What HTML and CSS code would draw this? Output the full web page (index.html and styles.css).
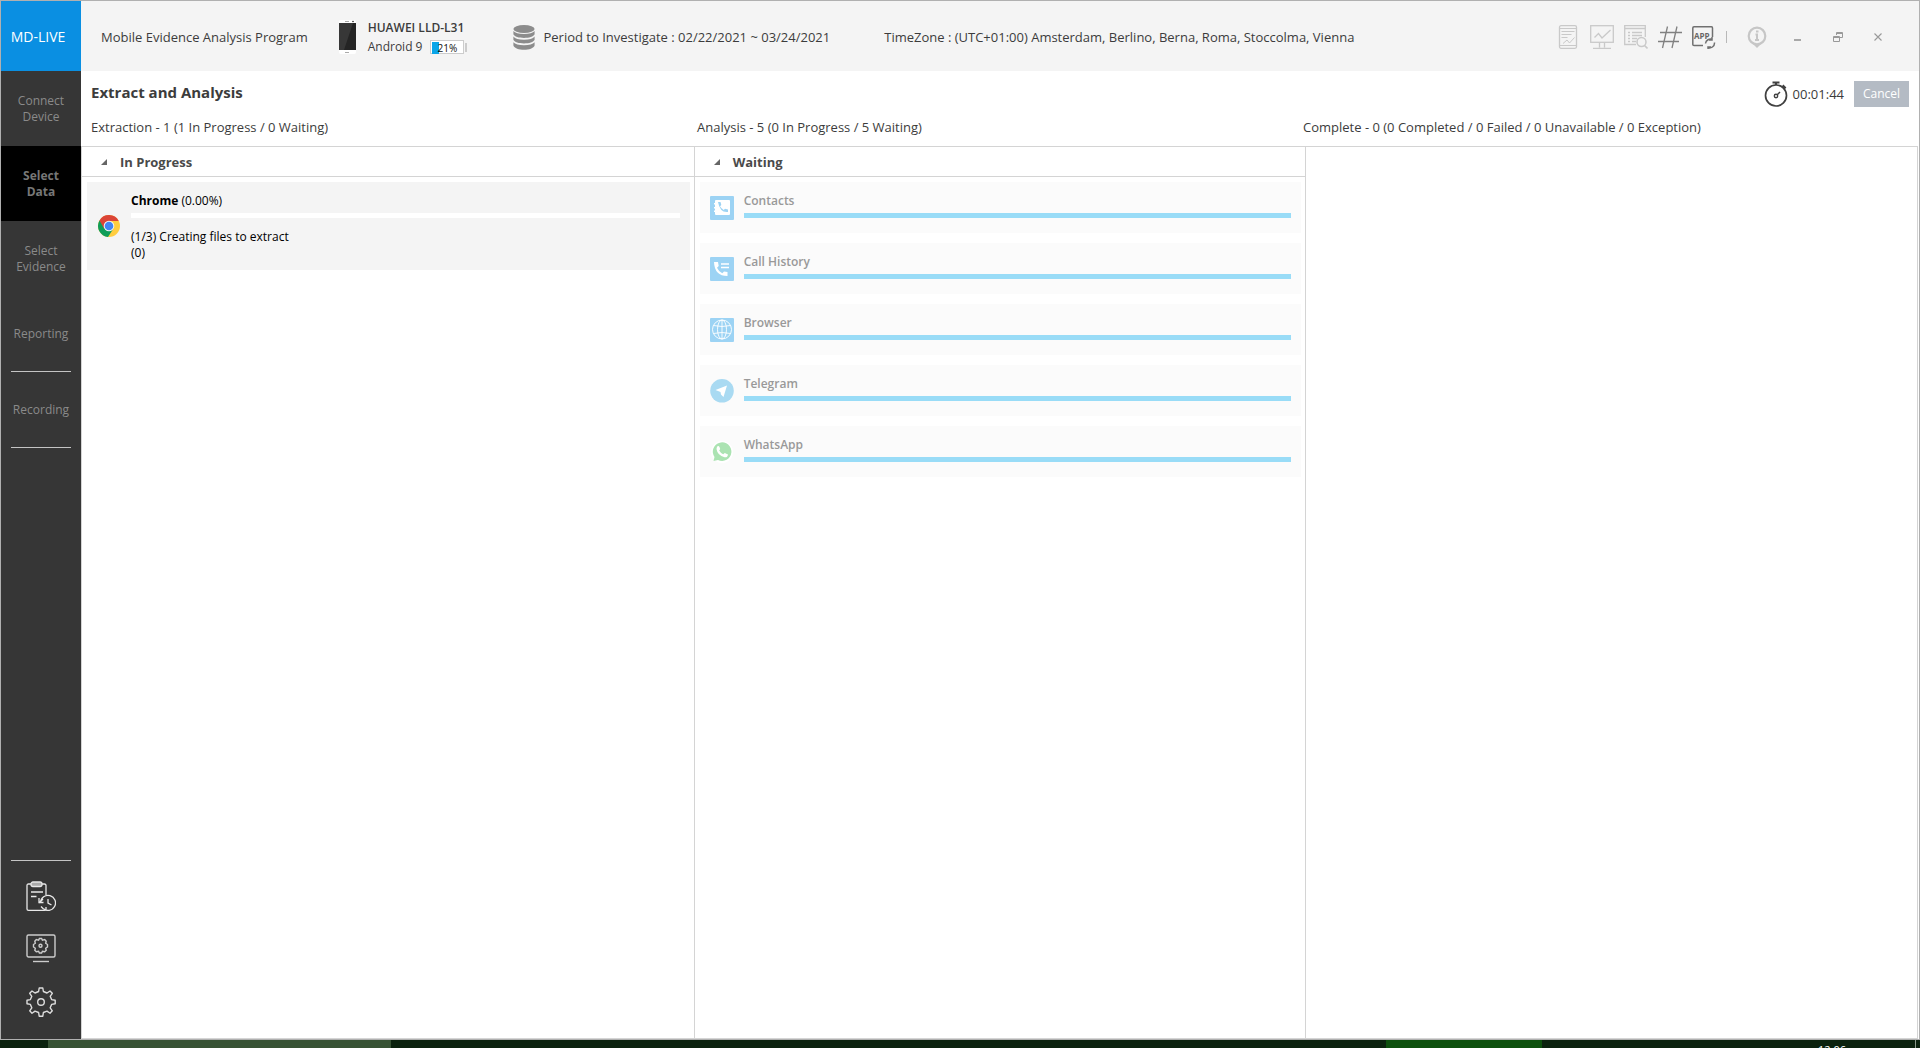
FILE: index.html
```html
<!DOCTYPE html>
<html lang="en">
<head>
<meta charset="utf-8">
<title>MD-LIVE</title>
<link rel="stylesheet" href="styles.css">
</head>
<body>
<div class="window">
  <aside class="sidebar">
    <div class="logo">MD-LIVE</div>
    <nav class="steps">
      <a class="step" href="#">Connect<br>Device</a>
      <a class="step active" href="#">Select<br>Data</a>
      <a class="step" href="#">Select<br>Evidence</a>
      <a class="step" href="#">Reporting</a>
      <hr class="rule">
      <a class="step" href="#">Recording</a>
      <hr class="rule">
    </nav>
    <div class="tools">
      <hr class="rule">
      <button class="tool" aria-label="History"><svg width="30" height="30" viewBox="0 0 30 30" fill="none" stroke="#e8e8e8" stroke-width="1.3"><path d="M5 3H2.500Q1 3 1 4.500V28Q1 29.300 2.500 29.300H18.500Q20 29.300 20 28V26M20 14V4.500Q20 3 18.500 3H16"/><rect x="5" y="1" width="11" height="4.500" rx="2" fill="#aaa"/><path d="M5 11H17M5 15.500H10.500" stroke-width="1.600"/><path d="M14.500 21.500A7.500 7.500 0 1 1 17 27.500L15 25.500M13 17V21.500H17.500M13 22L17 18M22 18V22L25.500 24"/></svg></button>
      <button class="tool" aria-label="Display settings"><svg width="30" height="30" viewBox="0 1 30 30" fill="none" stroke="#ccc" stroke-width="1.400"><rect x="1" y="2" width="28" height="22" rx="1.500"/><path d="M7 28.500H23"/><path d="M12.600 7.200 13.400 5.500H15.600L16.400 7.200 18.700 6.600 20.200 8.200 19.700 10.300 21.500 11.500V14L19.700 15.200 20.200 17.300 18.700 18.800 16.400 18.300 15.600 20H13.400L12.600 18.300 10.300 18.800 8.800 17.300 9.300 15.200 7.500 14V11.500L9.300 10.300 8.800 8.200 10.300 6.600Z"/><circle cx="14.500" cy="12.700" r="1.500"/></svg></button>
      <button class="tool" aria-label="Settings"><svg width="30" height="30" viewBox="0 0 30 30" fill="none" stroke="#ddd" stroke-width="1.400"><path d="M13.200 1H16.800L17.400 4.500 21 6 24 4 26.300 6.300 24.200 9.300 25.600 12.600 29.200 13.200V16.800L25.600 17.400 24.200 20.800 26.300 23.800 24 26.200 21 24.100 17.400 25.500 16.800 29.200H13.200L12.600 25.500 9 24.100 6 26.200 3.700 23.800 5.800 20.800 4.400 17.400 1 16.800V13.200L4.400 12.600 5.800 9.300 3.700 6.300 6 4 9 6 12.600 4.500Z" stroke-linejoin="round"/><circle cx="15" cy="15" r="3.300"/></svg></button>
    </div>
  </aside>

  <div class="content">
    <header class="topbar">
      <div class="program">Mobile Evidence Analysis Program</div>
      <div class="device">
        <svg width="17" height="34" viewBox="0 0 17 34"><rect width="17" height="34" rx="2" fill="#fff"/><rect y="3" width="17" height="27" fill="#242424"/><path d="M0 3H14L5 30H0Z" fill="#373737"/><path d="M6 1.500H10M6 32.500H10" stroke="#aaa"/><circle cx="14" cy="1.500" r=".8" fill="#222"/></svg>
        <div>
          <div class="model">HUAWEI LLD-L31</div>
          <div class="os">Android 9 <span class="battery"><span class="battery-box"><span class="charge" style="width:21%"></span><span class="percent">21%</span></span><span class="nub"></span></span></div>
        </div>
      </div>
      <div class="period">
        <svg width="22" height="25" viewBox="0 0 22 25" fill="#8c8c8c"><ellipse cx="11" cy="4" rx="10.600" ry="4"/><path d="M.4 6Q3 9 11 9T21.600 6V9.300C20 14.200 2 14.200.4 9.300Z"/><path d="M.4 11.500Q3 14.700 11 14.700T21.600 11.500V14.800C20 19.700 2 19.700.4 14.800Z"/><path d="M.4 17.200Q3 20.200 11 20.200T21.600 17.200V20.500C20 26.200 2 26.200.4 20.500Z"/></svg>
        <span>Period to Investigate : 02/22/2021 ~ 03/24/2021</span>
      </div>
      <div class="timezone">TimeZone : (UTC+01:00) Amsterdam, Berlino, Berna, Roma, Stoccolma, Vienna</div>
      <div class="actions">
        <button aria-label="Report"><svg width="24" height="24" viewBox="0 0 24 24" fill="none" stroke="#c9c9c9"><rect x="3.500" y=".7" width="17" height="22.600" rx="1.500" stroke-width="1.300"/><path d="M3.500 3.500H20.500M3.500 20.500H20.500M5.500 6.500H18.500M5.500 9.500H15.500M5.500 12.500H11.500"/><path d="M7 18.500 11 15 13.500 18 18.500 12.500"/></svg></button>
        <button aria-label="Monitor"><svg width="24" height="24" viewBox="0 0 24 24" fill="none" stroke="#c9c9c9" stroke-width="1.300"><rect x=".7" y=".7" width="22.600" height="16.600"/><path d="M9.500 17.500V22.500M14.500 17.500V22.500M3 23.300H21M4.500 12.500 8.500 8.500 12 13 20.500 5"/></svg></button>
        <button aria-label="Search list"><svg width="24" height="24" viewBox="0 0 24 24" fill="none" stroke="#c9c9c9" stroke-width="1.300"><path d="M12 19.500H.7V.7H21.300V12M.7 3.500H21.300M4 7.500H6M8 7.500H18M4 10.500H6M8 10.500H18M4 13.500H6M8 13.500H13M4 16.500H6M8 16.500H12"/><circle cx="17.500" cy="17" r="4.500" stroke-width="1.500"/><path d="M20.500 20.500 23.500 23.500" stroke-width="1.600"/></svg></button>
        <button aria-label="Hash"><svg width="24" height="24" viewBox="0 0 24 24" fill="none" stroke="#808080" stroke-width="1.300"><path d="M9.500 1.500 4.500 23M19 1.500 14 23M2 7.500H24M0 16.500H21"/></svg></button>
        <button aria-label="App update"><svg width="24" height="24" viewBox="0 0 24 24" fill="none" stroke="#707070" stroke-width="1.500"><path d="M11 20.500H2Q.8 20.500.8 19.500V3Q.8 1.800 2 1.800H19.500Q20.500 1.800 20.500 3V12"/><text x="2" y="14" font-size="8" font-weight="700" fill="#666" stroke="none">APP</text><path d="M13.500 18.500A5 5 0 0 1 20.500 14.500M22.500 17.500A5 5 0 0 1 15.500 22.500M20 12V15H17M16 24.500V22H19"/></svg></button>
        <span class="separator"></span>
        <button class="info" aria-label="Information"><svg width="20" height="24" viewBox="0 0 20 24" fill="none" stroke="#c6c6c6"><circle cx="10" cy="11" r="8.300" stroke-width="2.200"/><path d="M6.500 19.500H13.500L10 23Z" fill="#c6c6c6" stroke="none"/><path d="M8.500 9.500H10V15M8 15H12M9 6.500H11.500" stroke-width="2"/></svg></button>
      </div>
      <div class="window-buttons">
        <button aria-label="Minimize"><svg width="10" height="10" viewBox="0 0 10 10"><path d="M1 8H8" stroke="#a8a8a8" stroke-width="2"/></svg></button>
        <button aria-label="Restore"><svg width="10" height="10" viewBox="0 0 10 10" fill="none" stroke="#999"><path d="M3.500 3V.5H9.500V5.500H7M.5 4.500H6.500V9.500H.5ZM3.500 1.500H9.500M.5 5.500H6.500"/></svg></button>
        <button aria-label="Close"><svg width="10" height="10" viewBox="0 0 10 10"><path d="M1.500 1.500 8.500 8.500M8.500 1.500 1.500 8.500" stroke="#999" stroke-width="1.100"/></svg></button>
      </div>
    </header>

    <main>
      <div class="heading">
        <h1>Extract and Analysis</h1>
        <div class="timer">
          <svg width="24" height="26" viewBox="0 0 24 26" fill="none" stroke="#404040"><circle cx="12" cy="14.500" r="10.500" stroke-width="1.700"/><path d="M8.500 1.500H15.500M12 1.500V4" stroke-width="2.200"/><path d="M18.500 4.500 21.500 7.500" stroke-width="2.500"/><circle cx="12" cy="15" r="1.700" stroke-width="1.400"/><path d="M13 14 16 11" stroke-width="1.500"/></svg>
          <span>00:01:44</span>
        </div>
        <button class="cancel">Cancel</button>
      </div>
      <div class="summary">
        <div>Extraction - 1 (1 In Progress / 0 Waiting)</div>
        <div>Analysis - 5 (0 In Progress / 5 Waiting)</div>
        <div>Complete - 0 (0 Completed / 0 Failed / 0 Unavailable / 0 Exception)</div>
      </div>
      <div class="board">
        <section class="column">
          <h2><svg width="6" height="6" viewBox="0 0 6 6"><path d="M6 0V6H0Z" fill="#666"/></svg>In Progress</h2>
          <div class="list">
            <article class="card running">
              <svg width="22" height="22" viewBox="0 0 22 22"><circle cx="11" cy="11" r="11" fill="#ffcd40"/><path d="M11 11 1.500 5.500A11 11 0 0 0 10 22L15.500 13.500Z" fill="#0f9d58"/><path d="M1.500 5.500A11 11 0 0 1 20.700 6H11L6 13.500Z" fill="#db4437"/><circle cx="11" cy="11" r="5.300" fill="#f4f4f4"/><circle cx="11" cy="11" r="4.300" fill="#4285f4"/></svg>
              <div class="details">
                <div><b>Chrome</b> (0.00%)</div>
                <div class="bar empty"></div>
                <p>(1/3) Creating files to extract<br>(0)</p>
              </div>
            </article>
          </div>
        </section>
        <section class="column">
          <h2><svg width="6" height="6" viewBox="0 0 6 6"><path d="M6 0V6H0Z" fill="#666"/></svg>Waiting</h2>
          <div class="list">
            <article class="card waiting">
              <svg width="24" height="24" viewBox="0 0 24 24"><rect width="24" height="24" rx="1" fill="#9cd3f4"/><path d="M6 4H19Q20 4 20 5V18Q20 19 19 19H6Q5 19 5 18V16H4V14.500H5V12.500H4V11H5V8.500H4V7H5V5Q5 4 6 4Z" fill="#fff"/><path d="M8 6H10.500L11.300 9 10 10.300Q11.300 12.700 13.700 14L15 12.700 18 13.500V16Q10 17 8 6Z" fill="#9cd3f4"/></svg>
              <div class="details"><b>Contacts</b><div class="bar"></div></div>
            </article>
            <article class="card waiting">
              <svg width="24" height="24" viewBox="0 0 24 24"><rect width="24" height="24" rx="1" fill="#9cd3f4"/><path d="M4 5H8L8.700 9 7 10.800Q8.500 14.500 12.300 16.200L14 14.500 17.500 15V19Q4.500 19 4 5Z" fill="#fff"/><path d="M11 7H19M11 10.500H19" stroke="#fff" stroke-width="1.500"/></svg>
              <div class="details"><b>Call History</b><div class="bar"></div></div>
            </article>
            <article class="card waiting">
              <svg width="24" height="24" viewBox="0 0 24 24" fill="none" stroke="#fff" stroke-width=".9"><rect width="24" height="24" rx="1" fill="#9cd3f4" stroke="none"/><circle cx="12" cy="11.500" r="9.500"/><ellipse cx="12" cy="11.500" rx="4.500" ry="9.500"/><path d="M12 2V21M3.500 7.500Q12 9.500 20.500 7.500M3.500 15.500Q12 13.500 20.500 15.500"/></svg>
              <div class="details"><b>Browser</b><div class="bar"></div></div>
            </article>
            <article class="card waiting">
              <svg width="24" height="24" viewBox="0 0 24 24"><circle cx="12" cy="11.800" r="11.800" fill="#a9daf2"/><path d="M17 6.500 13.500 18 11 15.500 10.500 13 5.500 11Z" fill="#fff"/></svg>
              <div class="details"><b>Telegram</b><div class="bar"></div></div>
            </article>
            <article class="card waiting">
              <svg width="24" height="24" viewBox="0 0 24 24"><circle cx="12" cy="12" r="11" fill="#fff"/><path d="M3.500 21 4.500 17A9.300 9.300 0 1 1 8 20Z" fill="#abe3b2"/><path d="M7 6.800Q8.500 5.200 9.500 7L10.200 9 9.200 10.500Q10.500 13 13.200 14.300L14.800 13 18 14.500Q17.500 17.700 14.500 17.300 7.500 15.500 6.500 9Z" fill="#fff"/></svg>
              <div class="details"><b>WhatsApp</b><div class="bar"></div></div>
            </article>
          </div>
        </section>
        <section class="column"></section>
      </div>
    </main>
  </div>
</div>
<footer class="taskbar">
  <span class="task open"></span>
  <span class="task alert"></span>
  <time class="clock">12:06</time>
  <span class="desktop"></span>
</footer>
</body>
</html>
```
FILE: styles.css
```css
* { box-sizing: border-box; }

body {
  margin: 0;
  height: 100vh;
  display: grid;
  grid-template-rows: 1fr 8px;
  overflow: hidden;
  font: 13px/16px "Segoe UI", "Open Sans", "Noto Sans", sans-serif;
  color: #3c3c3c;
}

button {
  font: inherit;
  color: inherit;
  border: 0;
  padding: 0;
  background: none;
  cursor: pointer;
}

svg { display: block; flex: none; }
h1, h2, b, .active { font-weight: 700; }
.model { font-weight: 600; }

.window {
  display: grid;
  grid-template-columns: 80px 1fr;
  border: 1px solid #b0b0b0;
  min-height: 0;
  background: #fff;
}

/* Sidebar */
.sidebar {
  display: flex;
  flex-direction: column;
  background: #363636;
}
.logo {
  height: 70px;
  display: grid;
  place-items: center;
  padding-right: 6px;
  padding-top: 2px;
  background: #0a8fe2;
  color: #fff;
  font-size: 14px;
}
.step {
  height: 75px;
  display: grid;
  place-content: center;
  text-align: center;
  font-size: 12px;
  color: #8a8a8a;
  text-decoration: none;
}
.active { background: #000; color: #777; }
.rule {
  width: 60px;
  height: 1px;
  margin: 0 auto;
  border: 0;
  background: #c4c4c4;
}
.tools {
  margin-top: auto;
  padding-bottom: 22px;
  display: flex;
  flex-direction: column;
  align-items: center;
  gap: 23px;
}
.tools .rule { margin-bottom: -3px; }

/* Top bar */
.content {
  display: flex;
  flex-direction: column;
  min-width: 0;
}
.topbar {
  height: 70px;
  display: flex;
  align-items: center;
  padding: 2px 36px 0 20px;
  background: #f4f4f4;
  white-space: nowrap;
}
.device {
  display: flex;
  align-items: center;
  gap: 12px;
  margin-left: 31px;
}
.model { line-height: 20px; font-size: 12px; }
.os {
  display: flex;
  align-items: center;
  gap: 8px;
  line-height: 18px;
  font-size: 12px;
}
.battery { display: flex; align-items: center; gap: 1px; }
.battery-box {
  display: grid;
  width: 34px;
  height: 14px;
  padding: 1px;
  border: 1px solid #ccc;
  background: #fff;
}
.charge, .percent { grid-area: 1 / 1; }
.charge { background: #0aa5e8; }
.percent {
  line-height: 12px;
  font-size: 10px;
  text-align: center;
  color: #111;
}
.nub { width: 2px; height: 9px; background: #ccc; }
.period {
  display: flex;
  align-items: center;
  gap: 8px;
  margin-left: 46px;
}
.timezone { margin-left: 54px; }
.actions {
  display: flex;
  align-items: center;
  gap: 10px;
  margin-left: auto;
}
.separator { width: 1px; height: 12px; background: #b8b8b8; }
.info { margin-left: 10px; }
.window-buttons {
  display: flex;
  gap: 30px;
  margin-left: 26px;
}

/* Main area */
main {
  flex: 1;
  display: flex;
  flex-direction: column;
}
.heading {
  height: 44px;
  display: flex;
  align-items: center;
  padding: 2px 10px 0 10px;
}
h1 { margin: 0; padding-bottom: 4px; font-size: 15px; line-height: 20px; }
.timer {
  display: flex;
  align-items: center;
  gap: 5px;
  margin-left: auto;
}
.cancel {
  width: 55px;
  height: 26px;
  margin-left: 10px;
  background: #b4bbc4;
  color: #fff;
  font-size: 12px;
}
.summary {
  height: 31px;
  display: grid;
  grid-template-columns: repeat(3, 1fr);
  align-items: center;
  padding: 0 10px 8px 10px;
}
.board {
  flex: 1;
  display: grid;
  grid-template-columns: repeat(3, 1fr);
  margin-right: 1px;
  border: 1px solid #d4d4d4;
}
.column + .column { border-left: 1px solid #d4d4d4; }
h2 {
  display: flex;
  align-items: center;
  gap: 13px;
  height: 30px;
  margin: 0;
  padding-left: 19px;
  border-bottom: 1px solid #d4d4d4;
  font-size: 13px;
  color: #4a4a4a;
}
.list {
  display: flex;
  flex-direction: column;
  gap: 10px;
  padding: 5px 4px 5px 5px;
}
.card {
  display: flex;
  align-items: center;
  gap: 10px;
  padding: 11px 10px;
  font-size: 12px;
}
.running { height: 88px; background: #f4f4f4; color: #000; gap: 11px; padding-left: 11px; }
.waiting { height: 51px; background: #fbfbfb; color: #999; }
.waiting b { font-weight: 600; }
.details { flex: 1; }
.card .details { align-self: flex-start; }
.bar { height: 5px; margin-top: 4px; background: #99dcf7; }
.empty { background: #fff; }
p { margin: 11px 0 0; }

/* Desktop taskbar */
.taskbar {
  display: grid;
  grid-template-columns: 48fr 343fr 995fr 156fr 276fr 28fr 69fr 2fr 3fr;
  overflow: hidden;
  background: #0b220e;
}
.open { grid-column: 2; background: #375234; }
.alert { grid-column: 4; background: #0d500d; }
.clock {
  grid-column: 6;
  padding-top: 2px;
  font-size: 11px;
  line-height: 16px;
  color: #fff;
}
.desktop { grid-column: 8; width: 1px; background: #8a988a; }
```
